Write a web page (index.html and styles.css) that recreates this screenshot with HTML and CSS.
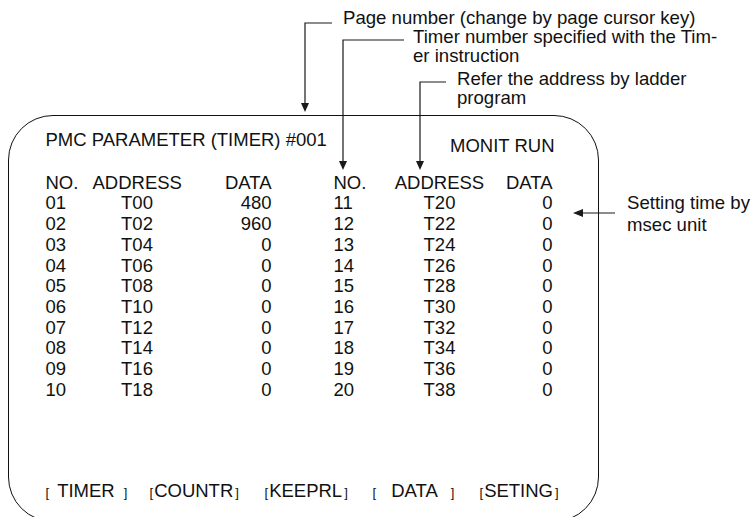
FILE: index.html
```html
<!DOCTYPE html>
<html lang="en">
<head>
  <meta charset="UTF-8">
  <title>PMC Parameter (Timer)</title>
  <link rel="stylesheet" href="styles.css">
</head>
<body>
  <div class="page">
    <div class="notes">
      <div class="note note-page">Page number (change by page cursor key)</div>
      <div class="note note-timer">Timer number specified with the Tim-<br>er instruction</div>
      <div class="note note-refer">Refer the address by ladder<br>program</div>
    </div>

    <div class="screen">
      <div class="title-row">
        <span>PMC PARAMETER (TIMER) #001</span>
        <span class="status">MONIT RUN</span>
      </div>

      <div class="cols">
        <div class="block left">
          <span>NO.</span><span class="addr">ADDRESS</span><span class="data">DATA</span>
          <span>01</span><span class="addr">T00</span><span class="data">480</span>
          <span>02</span><span class="addr">T02</span><span class="data">960</span>
          <span>03</span><span class="addr">T04</span><span class="data">0</span>
          <span>04</span><span class="addr">T06</span><span class="data">0</span>
          <span>05</span><span class="addr">T08</span><span class="data">0</span>
          <span>06</span><span class="addr">T10</span><span class="data">0</span>
          <span>07</span><span class="addr">T12</span><span class="data">0</span>
          <span>08</span><span class="addr">T14</span><span class="data">0</span>
          <span>09</span><span class="addr">T16</span><span class="data">0</span>
          <span>10</span><span class="addr">T18</span><span class="data">0</span>
        </div>
        <div class="block right">
          <span>NO.</span><span class="addr">ADDRESS</span><span class="data">DATA</span>
          <span>11</span><span class="addr">T20</span><span class="data">0</span>
          <span>12</span><span class="addr">T22</span><span class="data">0</span>
          <span>13</span><span class="addr">T24</span><span class="data">0</span>
          <span>14</span><span class="addr">T26</span><span class="data">0</span>
          <span>15</span><span class="addr">T28</span><span class="data">0</span>
          <span>16</span><span class="addr">T30</span><span class="data">0</span>
          <span>17</span><span class="addr">T32</span><span class="data">0</span>
          <span>18</span><span class="addr">T34</span><span class="data">0</span>
          <span>19</span><span class="addr">T36</span><span class="data">0</span>
          <span>20</span><span class="addr">T38</span><span class="data">0</span>
        </div>
      </div>

      <div class="softkeys">
        <div class="key pad-s"><span class="br">[</span><span class="label">TIMER</span><span class="br">]</span></div>
        <div class="key"><span class="br">[</span><span class="label">COUNTR</span><span class="br">]</span></div>
        <div class="key"><span class="br">[</span><span class="label">KEEPRL</span><span class="br">]</span></div>
        <div class="key pad-l"><span class="br">[</span><span class="label">DATA</span><span class="br">]</span></div>
        <div class="key"><span class="br">[</span><span class="label">SETING</span><span class="br">]</span></div>
      </div>
    </div>

    <div class="note note-setting">Setting time by<br>msec unit</div>

    <svg class="leaders" width="755" height="517" viewBox="0 0 755 517">
      <g fill="none" stroke="#1a1a1a" stroke-width="1.2">
        <polyline points="332,23 305,23 305,104"/>
        <polyline points="404,40 343,40 343,162"/>
        <polyline points="446,82 420,82 420,162"/>
        <line x1="615" y1="213" x2="582" y2="213"/>
      </g>
      <g fill="#1a1a1a">
        <polygon points="301,103 309,103 305,112"/>
        <polygon points="339,161 347,161 343,170"/>
        <polygon points="416,161 424,161 420,170"/>
        <polygon points="583,209 583,217 573,213"/>
      </g>
    </svg>
  </div>
</body>
</html>
```

FILE: styles.css
```css
html, body {
  margin: 0;
  overflow: hidden;
  background: #fff;
}

body {
  font-family: "Liberation Sans", Arial, sans-serif;
  font-size: 18.5px;
  color: #111;
}

.page {
  position: relative;
  width: 755px;
  height: 517px;
}

/* callouts above the screen */
.notes {
  height: 115px;
}

.note {
  position: absolute;
  font-size: 18.6px;
  line-height: 19px;
  white-space: nowrap;
}

.note-page { left: 343px; top: 8px; }
.note-timer { left: 413px; top: 27px; }
.note-refer { left: 457px; top: 69px; }
.note-setting { left: 627px; top: 192px; line-height: 22px; }

.leaders {
  position: absolute;
  left: 0;
  top: 0;
  pointer-events: none;
}

/* the CRT screen */
.screen {
  box-sizing: border-box;
  margin-left: 8px;
  width: 591px;
  height: 407px;
  border: 1.5px solid #111;
  border-radius: 45px;
  padding: 14px 0 17px 36.5px;
  display: flex;
  flex-direction: column;
  line-height: 20.7px;
}

.title-row {
  display: flex;
  justify-content: space-between;
  align-items: flex-start;
  width: 509px;
}

.status {
  padding-top: 6px;
}

.cols {
  display: flex;
  gap: 62px;
  margin-top: 16px;
}

.block {
  display: grid;
}

.block.left {
  grid-template-columns: 47px 89px 90px;
}

.block.right {
  grid-template-columns: 61px 90px 68px;
}

.addr {
  text-align: center;
}

.data {
  text-align: right;
}

.softkeys {
  margin-top: auto;
  display: grid;
  grid-template-columns: 104px 115px 108px 107px auto;
}

.key {
  display: flex;
  align-items: baseline;
}

.key .br {
  font-size: 13px;
}

.key .label {
  padding: 0 2px 0 1px;
}

.key.pad-s .label {
  padding: 0 9px 0 8px;
}

.key.pad-l .label {
  padding: 0 13px 0 15px;
}
```
